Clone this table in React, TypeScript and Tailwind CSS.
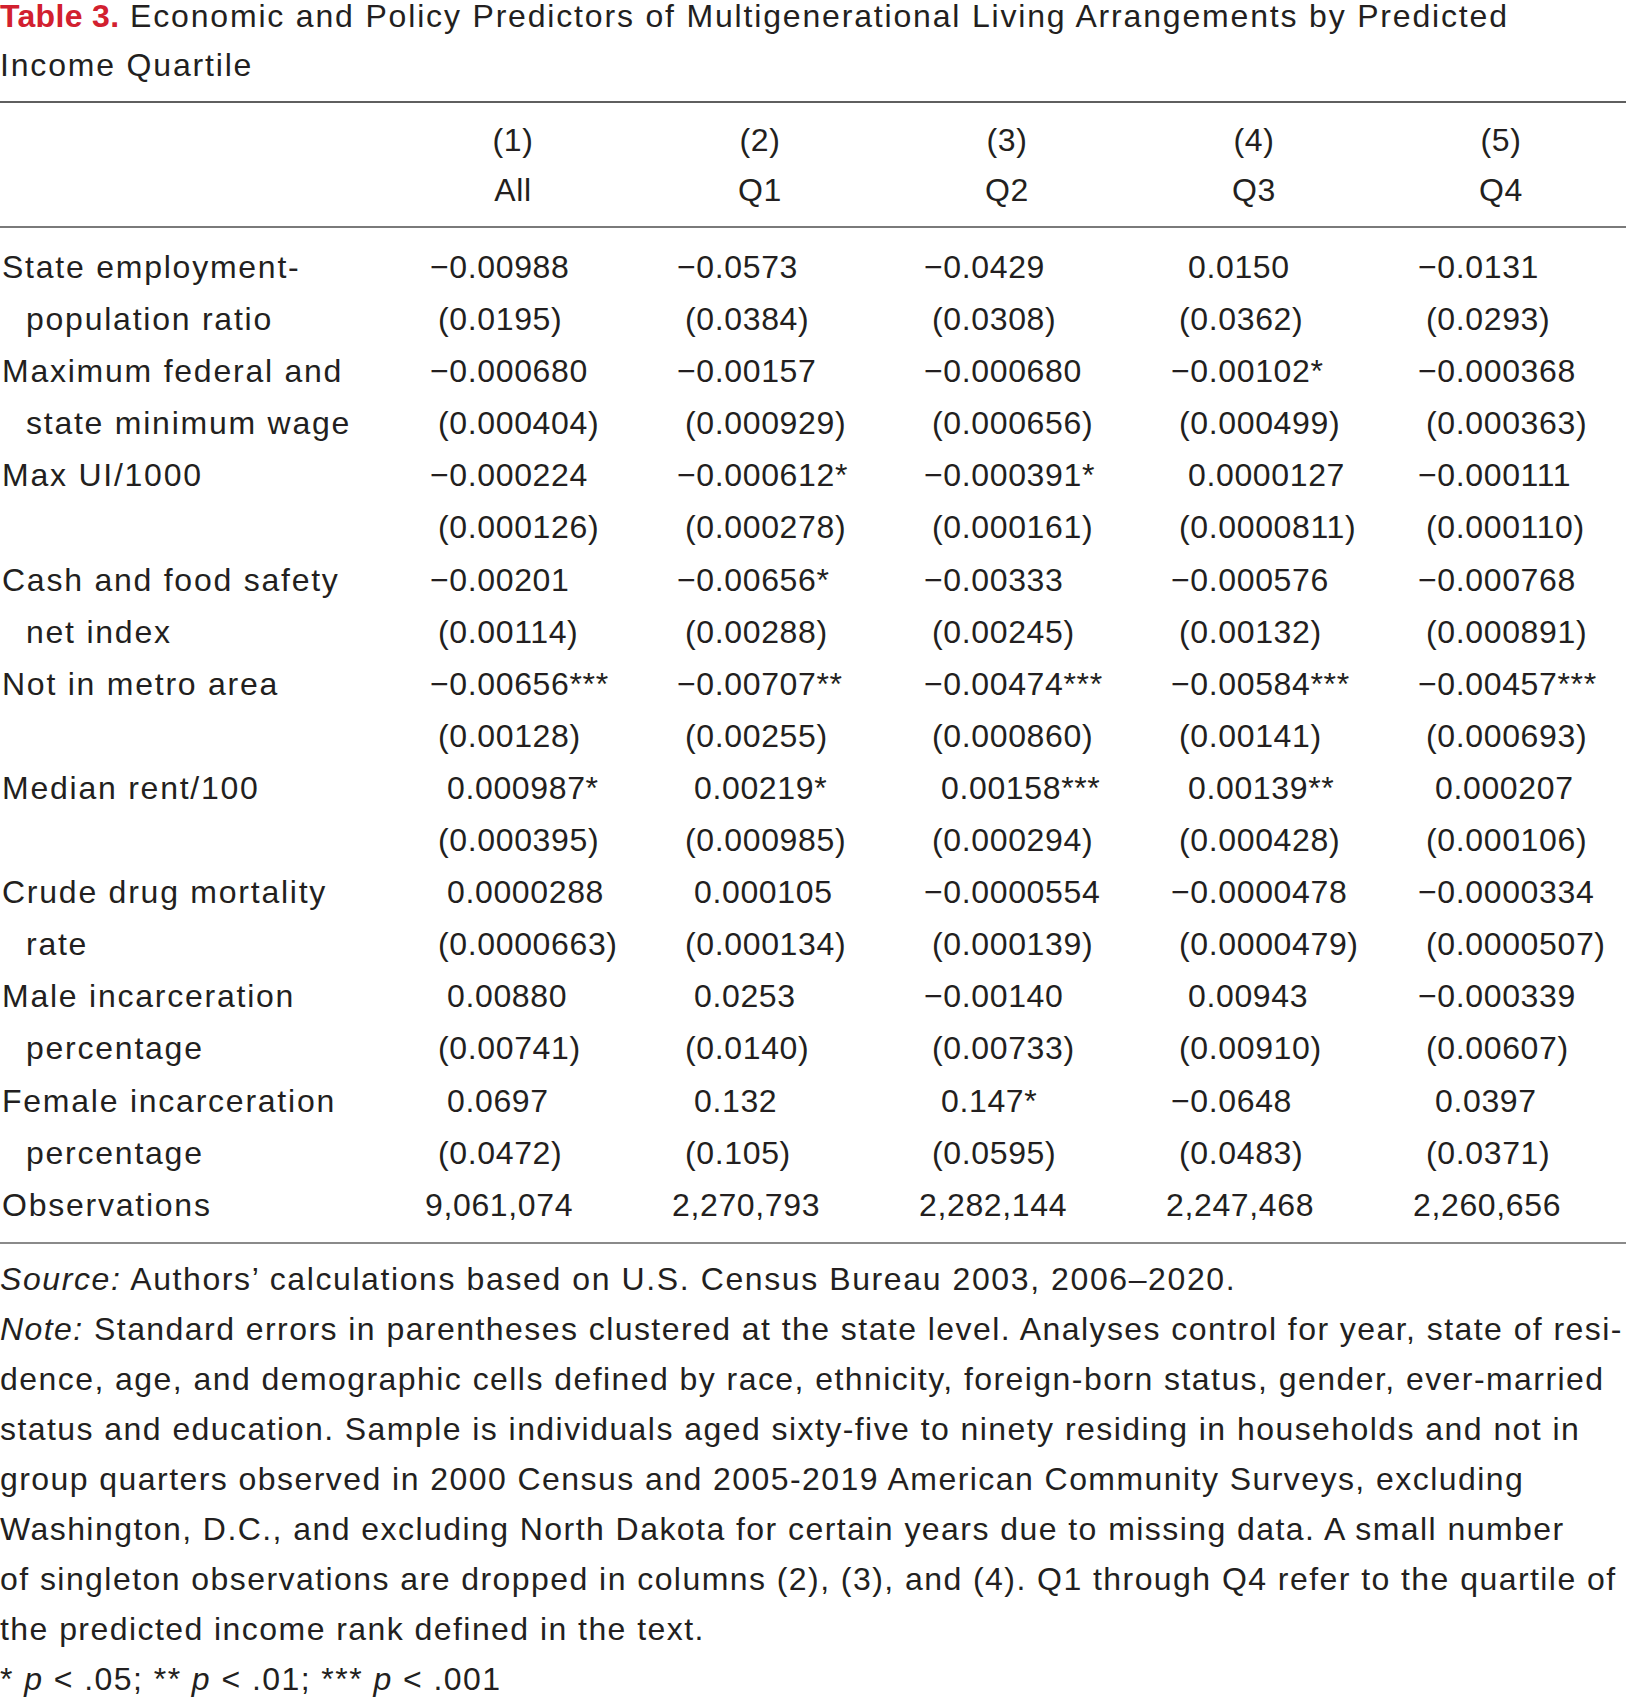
const rows = [
    {
        label: ['State employment-', 'population ratio'],
        coef: ['−0.00988', '−0.0573', '−0.0429', '0.0150', '−0.0131'],
        se: ['(0.0195)', '(0.0384)', '(0.0308)', '(0.0362)', '(0.0293)'],
    },
    {
        label: ['Maximum federal and', 'state minimum wage'],
        coef: ['−0.000680', '−0.00157', '−0.000680', '−0.00102*', '−0.000368'],
        se: ['(0.000404)', '(0.000929)', '(0.000656)', '(0.000499)', '(0.000363)'],
    },
    {
        label: ['Max UI/1000', ''],
        coef: ['−0.000224', '−0.000612*', '−0.000391*', '0.0000127', '−0.000111'],
        se: ['(0.000126)', '(0.000278)', '(0.000161)', '(0.0000811)', '(0.000110)'],
    },
    {
        label: ['Cash and food safety', 'net index'],
        coef: ['−0.00201', '−0.00656*', '−0.00333', '−0.000576', '−0.000768'],
        se: ['(0.00114)', '(0.00288)', '(0.00245)', '(0.00132)', '(0.000891)'],
    },
    {
        label: ['Not in metro area', ''],
        coef: ['−0.00656***', '−0.00707**', '−0.00474***', '−0.00584***', '−0.00457***'],
        se: ['(0.00128)', '(0.00255)', '(0.000860)', '(0.00141)', '(0.000693)'],
    },
    {
        label: ['Median rent/100', ''],
        coef: ['0.000987*', '0.00219*', '0.00158***', '0.00139**', '0.000207'],
        se: ['(0.000395)', '(0.000985)', '(0.000294)', '(0.000428)', '(0.000106)'],
    },
    {
        label: ['Crude drug mortality', 'rate'],
        coef: ['0.0000288', '0.000105', '−0.0000554', '−0.0000478', '−0.0000334'],
        se: ['(0.0000663)', '(0.000134)', '(0.000139)', '(0.0000479)', '(0.0000507)'],
    },
    {
        label: ['Male incarceration', 'percentage'],
        coef: ['0.00880', '0.0253', '−0.00140', '0.00943', '−0.000339'],
        se: ['(0.00741)', '(0.0140)', '(0.00733)', '(0.00910)', '(0.00607)'],
    },
    {
        label: ['Female incarceration', 'percentage'],
        coef: ['0.0697', '0.132', '0.147*', '−0.0648', '0.0397'],
        se: ['(0.0472)', '(0.105)', '(0.0595)', '(0.0483)', '(0.0371)'],
    },
];

const observations = ['9,061,074', '2,270,793', '2,282,144', '2,247,468', '2,260,656'];
const heads = [['(1)', 'All'], ['(2)', 'Q1'], ['(3)', 'Q2'], ['(4)', 'Q3'], ['(5)', 'Q4']];

const grid = 'grid grid-cols-[430px_247px_247px_247px_247px_1fr]';

function Coef({ value }: { value: string }) {
    // negatives hang the minus sign, positives line up with the digits
    const pad = value.startsWith('−') ? 'pl-0' : 'pl-[17px]';
    return <div className={`${pad} whitespace-nowrap`}>{value}</div>;
}

export default function App() {
    return (
        <div
            className="w-[1626px] h-[1698px] overflow-hidden bg-white text-[#231f20] text-[32px] tracking-[0.045em]"
            style={{ fontFamily: '"Liberation Sans", Arial, sans-serif' }}
        >
            <h1 className="whitespace-nowrap font-normal tracking-[0.057em]">
                <div className="leading-[32px]">
                    <span className="font-bold text-[#d2202f] tracking-[0.01em]">Table 3.</span> Economic and Policy Predictors of Multigenerational Living Arrangements by Predicted
                </div>
                <div className="mt-[17px] leading-[32px]">Income Quartile</div>
            </h1>

            <div className="mt-[20px] border-t-2 border-[#5f5f5f]" />

            <div className={`${grid} pt-[12px] pb-[11px] leading-[50px] tracking-[0.02em]`}>
                <div />
                {heads.map(([num, name]) => (
                    <div key={num} className="w-[166px] text-center">
                        <div>{num}</div>
                        <div>{name}</div>
                    </div>
                ))}
            </div>

            <div className="border-t-2 border-[#7a7a7a]" />

            <div className="pt-[13px] pb-[11px] leading-[52.1px]">
                {rows.map((r) => (
                    <div key={r.label[0]} className={grid}>
                        <div className="pl-[2px] whitespace-nowrap tracking-[0.055em]">
                            <div>{r.label[0]}</div>
                            <div className="pl-[24px]">{r.label[1] || '\u00a0'}</div>
                        </div>
                        {r.coef.map((c, i) => (
                            <div key={i} className="tracking-[0.02em]">
                                <Coef value={c} />
                                <div className="pl-[8px] whitespace-nowrap">{r.se[i]}</div>
                            </div>
                        ))}
                    </div>
                ))}
                <div className={grid}>
                    <div className="pl-[2px] tracking-[0.055em]">Observations</div>
                    {observations.map((o) => (
                        <div key={o} className="-ml-[5px] whitespace-nowrap tracking-[0.02em]">{o}</div>
                    ))}
                </div>
            </div>

            <div className="border-t-2 border-[#8a8a8a]" />

            <div className="pt-[10px] leading-[50px] whitespace-nowrap">
                <p className="tracking-[0.05em]"><em>Source:</em> Authors’ calculations based on U.S. Census Bureau 2003, 2006–2020.</p>
                <p><em>Note:</em> Standard errors in parentheses clustered at the state level. Analyses control for year, state of resi-</p>
                <p>dence, age, and demographic cells defined by race, ethnicity, foreign-born status, gender, ever-married</p>
                <p>status and education. Sample is individuals aged sixty-five to ninety residing in households and not in</p>
                <p>group quarters observed in 2000 Census and 2005-2019 American Community Surveys, excluding</p>
                <p>Washington, D.C., and excluding North Dakota for certain years due to missing data. A small number</p>
                <p>of singleton observations are dropped in columns (2), (3), and (4). Q1 through Q4 refer to the quartile of</p>
                <p>the predicted income rank defined in the text.</p>
                <p>* <em>p</em> &lt; .05; ** <em>p</em> &lt; .01; *** <em>p</em> &lt; .001</p>
            </div>
        </div>
    );
}
